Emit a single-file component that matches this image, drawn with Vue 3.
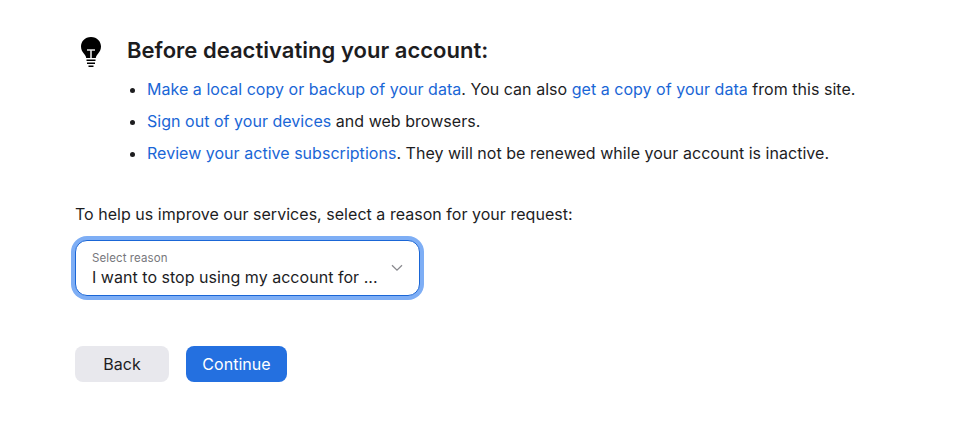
<script setup>
const reason = 'I want to stop using my account for ...'
</script>

<template>
  <div class="page">
    <div class="tips">
      <svg class="bulb" viewBox="0 0 32 40" width="32" height="40">
        <path d="M16 3C9.8 3 6 7.6 6 12.6c0 3.4 1.5 5.4 3 7.2 1.1 1.4 2 2.6 2.2 4.2h9.6c.2-1.6 1.1-2.8 2.2-4.2 1.5-1.8 3-3.8 3-7.2C26 7.6 22.2 3 16 3z" fill="#000" />
        <path d="M12 16h8M16 16v8" fill="none" stroke="#e4e4e4" stroke-width="1.6" />
        <path d="M11.5 26.2h9M12 29.2h8M13.5 32.2h5" fill="none" stroke="#000" stroke-width="1.5" />
      </svg>
      <div class="tips-body">
        <h2>Before deactivating your account:</h2>
        <ul>
          <li><a href="#">Make a local copy or backup of your data</a>. You can also <a href="#">get a copy of your data</a> from this site.</li>
          <li><a href="#">Sign out of your devices</a> and web browsers.</li>
          <li><a href="#">Review your active subscriptions</a>. They will not be renewed while your account is inactive.</li>
        </ul>
      </div>
    </div>

    <p class="prompt">To help us improve our services, select a reason for your request:</p>

    <div class="select">
      <div class="select-text">
        <span class="select-label">Select reason</span>
        <span class="select-value">{{ reason }}</span>
      </div>
      <svg class="chevron" viewBox="0 0 12 8" width="12" height="8">
        <path d="M1 1.2l5 5 5-5" fill="none" stroke="#8a8a8f" stroke-width="1.3" />
      </svg>
    </div>

    <div class="actions">
      <button class="btn btn-back">Back</button>
      <button class="btn btn-continue">Continue</button>
    </div>
  </div>
</template>

<style>
html, body {
  background: #fff;
}
</style>

<style scoped>
.page {
  box-sizing: border-box;
  width: 979px;
  height: 429px;
  padding: 30px 0 0 75px;
  font-family: Inter, "Liberation Sans", sans-serif;
  font-size: 16px;
  letter-spacing: 0.03px;
  color: #1d1d1f;
  overflow: hidden;
}

.tips {
  display: flex;
  gap: 20px;
}

.bulb {
  flex: none;
  margin-top: 4px;
}

.tips-body h2 {
  margin: 0 0 3px;
  font-size: 22px;
  font-weight: 600;
  line-height: 40px;
  letter-spacing: 0.03px;
}

ul {
  margin: 0;
  padding: 0 0 0 20px;
}

li {
  line-height: 32px;
}

a {
  color: #1a66d6;
  text-decoration: none;
}

.prompt {
  margin: 33px 0 0;
  line-height: 24px;
}

.select {
  box-sizing: border-box;
  display: flex;
  align-items: center;
  justify-content: space-between;
  width: 345px;
  height: 56px;
  margin-top: 14px;
  padding: 2px 16px 0;
  background: #fff;
  border: 1px solid #1a66d6;
  border-radius: 12px;
  box-shadow: 0 0 0 4px #7eaef5;
}

.select-text {
  display: flex;
  flex-direction: column;
  min-width: 0;
}

.select-label {
  font-size: 11.5px;
  line-height: 15px;
  letter-spacing: 0.1px;
  color: #77777c;
}

.select-value {
  margin-top: 1px;
  line-height: 20px;
  white-space: nowrap;
}

.chevron {
  flex: none;
  margin-top: -2px;
}

.actions {
  display: flex;
  gap: 17px;
  margin-top: 50px;
}

.btn {
  height: 36px;
  border: none;
  border-radius: 8px;
  font-family: inherit;
  font-size: 16px;
  letter-spacing: inherit;
  padding: 0;
}

.btn-back {
  width: 94px;
  background: #e8e8ed;
  color: #1d1d1f;
}

.btn-continue {
  width: 101px;
  background: #2470e0;
  color: #fff;
}
</style>
